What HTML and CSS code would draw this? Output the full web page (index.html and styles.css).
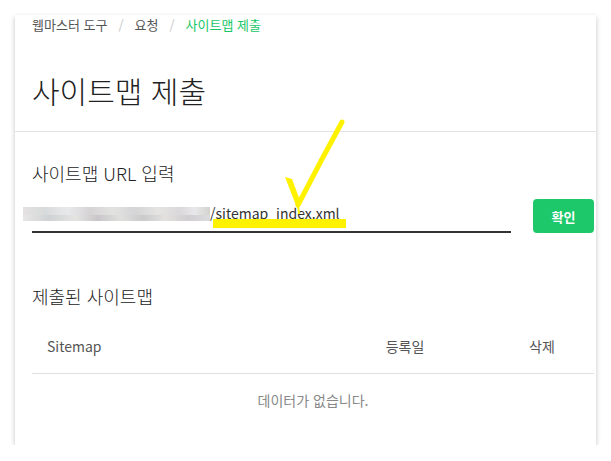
FILE: index.html
```html
<!DOCTYPE html>
<html lang="ko">

<head>
  <meta charset="UTF-8">
  <meta name="viewport" content="width=device-width, initial-scale=1.0">
  <title>사이트맵 제출</title>
  <link rel="stylesheet" href="styles.css">
</head>

<body>
  <div class="card">
    <div class="page-head">
      <nav class="breadcrumb">
        <span>웹마스터 도구</span>
        <span class="sep">/</span>
        <span>요청</span>
        <span class="sep">/</span>
        <span class="current">사이트맵 제출</span>
      </nav>
      <h1>사이트맵 제출</h1>
    </div>

    <section class="submit">
      <h2>사이트맵 URL 입력</h2>
      <div class="url-row">
        <div class="url-input">
          <span class="blurred"></span><span class="path">/sitemap_index.xml</span>
        </div>
        <button class="btn-ok">확인</button>
      </div>
    </section>

    <section class="list">
      <h2>제출된 사이트맵</h2>
      <div class="table">
        <div class="thead">
          <span>Sitemap</span>
          <span class="center">등록일</span>
          <span class="center">삭제</span>
        </div>
        <div class="empty">데이터가 없습니다.</div>
      </div>
    </section>

    <!-- 노란 체크 표시 (스크린샷 위 주석) -->
    <svg class="mark" width="80" height="120" viewBox="0 0 80 120">
      <rect x="-63" y="100" width="133" height="9" fill="#fff200"/>
      <polygon points="9,58 16,60 25,84 21,89" fill="#fff200"/>
      <path d="M22 86 L45 42 L66 3" fill="none" stroke="#fff200" stroke-width="5" stroke-linecap="round"/>
      <path d="M22 86 L23 95" fill="none" stroke="#fff200" stroke-width="2"/>
    </svg>
  </div>
</body>

</html>
```

FILE: styles.css
```css
body {
  margin: 0;
  padding: 15px 15px 0;
  background-color: #fff;
  font-family: "Noto Sans CJK KR", "Noto Sans", sans-serif;
  color: #222;
}

.card {
  position: relative;
  width: 581px;
  height: 430px;
  box-sizing: border-box;
  background-color: #fff;
  box-shadow: 0 2px 5px rgba(0, 0, 0, 0.24);
}

.page-head {
  padding: 0 2px 21px 17px;
  border-bottom: 1px solid #e3e3e3;
}

.breadcrumb {
  display: flex;
  gap: 9px;
  height: 20px;
  line-height: 20px;
  font-size: 13px;
  color: #555;
}

.breadcrumb .sep {
  color: #c8c8c8;
  margin: 0 2px;
}

.breadcrumb .current {
  color: #19c767;
}

h1 {
  margin: 35px 0 0;
  font-size: 30px;
  font-weight: 300;
  line-height: 40px;
  color: #222;
}

.submit,
.list {
  padding: 0 2px 0 17px;
}

h2 {
  margin: 0;
  font-size: 18px;
  font-weight: 300;
  line-height: 26px;
  color: #222;
}

.submit h2 {
  margin-top: 28px;
}

.url-row {
  display: flex;
  align-items: flex-end;
  justify-content: space-between;
  margin-top: 13px;
}

.url-input {
  display: flex;
  align-items: center;
  width: 479px;
  height: 32px;
  border-bottom: 2px solid #333;
  font-size: 14px;
  color: #333;
  line-height: 20px;
}

.blurred {
  display: inline-block;
  width: 187px;
  height: 14px;
  margin-left: -9px;
  margin-top: -2px;
  background:
    linear-gradient(90deg, #e4e1e1 0, #d8dbdb 12%, #e8e9eb 24%, #d6d3d5 36%, #e2e3e1 48%, #d5d4d6 60%, #e5e4e2 72%, #dad8da 84%, #e8e7e9 92%, #d2d3cf 100%) top / 100% 8px no-repeat,
    linear-gradient(90deg, #e8e6e6 0, #cfd2d4 14%, #e4e4e2 28%, #c9c6c9 40%, #dfe0de 52%, #cbcacc 64%, #e2e1df 76%, #d0ced0 88%, #dcdbdd 100%) bottom / 100% 6px no-repeat;
}

.path {
  margin-top: -4px;
}

.btn-ok {
  width: 61px;
  height: 34px;
  border: none;
  border-radius: 4px;
  background-color: #1dc86b;
  color: #fff;
  font-family: inherit;
  font-size: 13px;
  font-weight: 700;
  cursor: pointer;
}

.list h2 {
  margin-top: 50px;
}

.thead {
  display: grid;
  grid-template-columns: 1fr 64px 104px;
  column-gap: 53px;
  margin-top: 17px;
  padding: 10px 0 17px 15px;
  border-bottom: 1px solid #e0e0e0;
  font-size: 14px;
  line-height: 20px;
  color: #555;
}

.thead .center {
  text-align: center;
}

.empty {
  padding-top: 16px;
  text-align: center;
  font-size: 14px;
  line-height: 20px;
  color: #888;
}

.mark {
  position: absolute;
  left: 261px;
  top: 104px;
  overflow: visible;
}
```
